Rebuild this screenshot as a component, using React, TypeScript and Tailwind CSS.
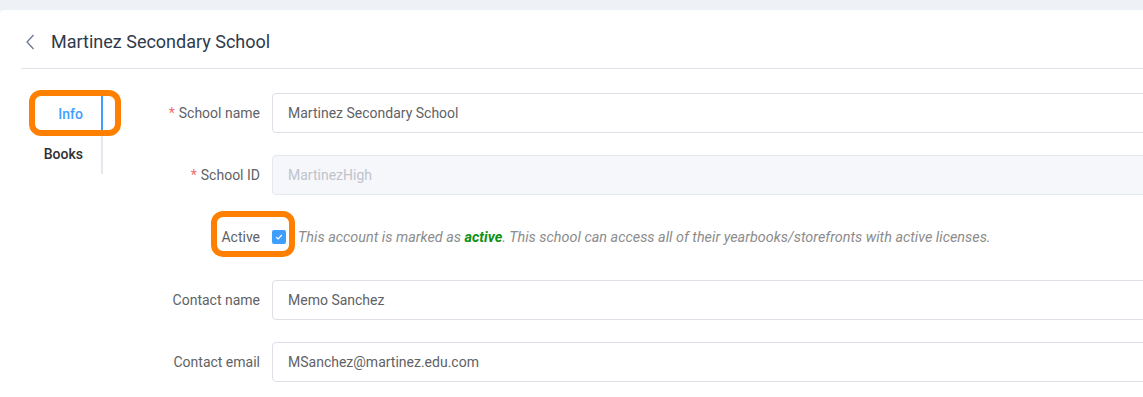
import React from "react";

function Row({ label, required, children, h = 40 }: { label: string; required?: boolean; children: React.ReactNode; h?: number }) {
  return (
    <div className="flex mb-[22px]" style={{ height: h }}>
      <div className="w-[120px] shrink-0 pr-[12px] flex items-center justify-end text-[14px] text-[#606266]">
        {required && <span className="text-[#f56c6c] mr-[4px]">*</span>}
        {label}
      </div>
      <div className="flex-1 flex items-center min-w-0">{children}</div>
    </div>
  );
}

function Input({ value, disabled }: { value: string; disabled?: boolean }) {
  return (
    <div
      className={
        "w-full h-[40px] rounded-[4px] border px-[15px] flex items-center text-[14px] " +
        (disabled ? "bg-[#f5f7fa] border-[#e4e7ed] text-[#c0c4cc]" : "bg-white border-[#dcdfe6] text-[#606266]")
      }
    >
      {value}
    </div>
  );
}

export default function App() {
  return (
    <div className="w-full h-[397px] bg-[#eef1f6] pt-[10px] overflow-hidden" style={{ fontFamily: "Roboto, 'Liberation Sans', sans-serif" }}>
      <div className="bg-white h-full rounded-tl-[4px] pl-[21px]">
        <div className="h-[59px] flex items-center pt-[5px] border-b border-[#dfe3ea]">
          <svg width="10" height="16" viewBox="0 0 10 16" className="ml-[4px]">
            <polyline points="8.5,1 2,8 8.5,15" fill="none" stroke="#6a7894" strokeWidth="1.3" />
          </svg>
          <span className="ml-[16px] text-[18px] text-[#303a4b]">Martinez Secondary School</span>
        </div>
        <div className="flex pt-[23px]">
          <div className="relative w-[82px] shrink-0 mt-[2px]">
            <div className="border-r-2 border-[#e4e7ed]">
              <div className="h-[40px] flex items-center justify-end pr-[18px] text-[14px] font-medium text-[#409eff] border-r-2 border-[#409eff] -mr-[2px]">
                Info
              </div>
              <div className="h-[40px] flex items-center justify-end pr-[18px] text-[14px] font-medium text-[#303133]">
                Books
              </div>
            </div>
            <div className="absolute left-[8px] top-[-4px] w-[92px] h-[46px] border-[6px] border-[#ff8000] rounded-[12px]" />
          </div>
          <div className="flex-1 ml-[49px] pt-[1px] -mr-[30px]">
            <Row label="School name" required>
              <Input value="Martinez Secondary School" />
            </Row>
            <Row label="School ID" required>
              <Input value="MartinezHigh" disabled />
            </Row>
            <Row label="Active" h={41}>
              <div className="flex items-center relative">
                <div className="w-[14px] h-[14px] rounded-[2px] bg-[#409eff] flex items-center justify-center">
                  <svg width="10" height="10" viewBox="0 0 10 10">
                    <polyline points="2.2,5.2 4.2,7 7.8,3" fill="none" stroke="#fff" strokeWidth="1.2" />
                  </svg>
                </div>
                <span className="ml-[12px] text-[14.4px] italic text-[#8c8c8c] whitespace-nowrap">
                  This account is marked as <b className="text-[#0f900f] font-bold">active</b>. This school can access all of their yearbooks/storefronts with active licenses.
                </span>
                <div className="absolute left-[-61px] top-[-16px] w-[84px] h-[46px] border-[6px] border-[#ff8000] rounded-[12px]" />
              </div>
            </Row>
            <Row label="Contact name">
              <Input value="Memo Sanchez" />
            </Row>
            <Row label="Contact email">
              <Input value="MSanchez@martinez.edu.com" />
            </Row>
          </div>
        </div>
      </div>
    </div>
  );
}
